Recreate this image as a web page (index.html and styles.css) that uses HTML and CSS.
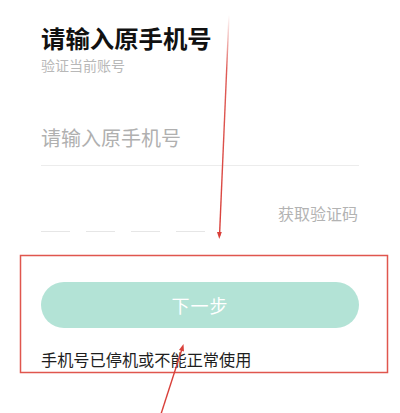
FILE: index.html
```html
<!DOCTYPE html>
<html lang="zh">
<head>
<meta charset="utf-8">
<link rel="stylesheet" href="styles.css">
</head>
<body>
<main class="page">
  <h1 class="title">请输入原手机号</h1>
  <p class="subtitle">验证当前账号</p>
  <div class="field">
    <span class="placeholder">请输入原手机号</span>
  </div>
  <div class="code-row">
    <span class="get-code">获取验证码</span>
  </div>
  <div class="code-boxes">
    <span class="dash"></span><span class="dash"></span><span class="dash"></span><span class="dash"></span>
  </div>
  <button class="next">下一步</button>
  <p class="help">手机号已停机或不能正常使用</p>
</main>
<svg class="annot" width="400" height="413" viewBox="0 0 400 413">
  <defs>
    <linearGradient id="fade" gradientUnits="userSpaceOnUse" x1="0" y1="15" x2="0" y2="236">
      <stop offset="0" stop-color="#d9403a" stop-opacity="0"/>
      <stop offset="0.25" stop-color="#d9403a" stop-opacity="0.85"/>
      <stop offset="1" stop-color="#d9403a"/>
    </linearGradient>
  </defs>
  <rect x="20.5" y="255.5" width="367" height="117" fill="none" stroke="#e0564e" stroke-width="1.5"/>
  <line x1="229" y1="15" x2="219.5" y2="236" stroke="url(#fade)" stroke-width="1.4"/>
  <path d="M217 232 L219.3 239 L221.8 232 Z" fill="#d9403a"/>
  <line x1="161" y1="414" x2="182" y2="349" stroke="#d9403a" stroke-width="1.4"/>
  <path d="M179 350 L183.5 344 L184 351.5 Z" fill="#d9403a"/>
</svg>
</body>
</html>
```
FILE: styles.css
```css
html, body {
  margin: 0;
  padding: 0;
  background: #ffffff;
}
body {
  width: 400px;
  height: 413px;
  overflow: hidden;
  position: relative;
  font-family: "Noto Sans CJK SC", "Noto Sans", sans-serif;
}
.page {
  padding: 24px 41px 0 41px;
  display: flex;
  flex-direction: column;
}
.title {
  margin: 0;
  font-size: 24.4px;
  line-height: 28px;
  font-weight: 700;
  color: #111;
}
.subtitle {
  margin: 4px 0 0 0;
  font-size: 14px;
  line-height: 18px;
  color: #b8b8b8;
}
.field {
  margin-top: 51px;
  padding-bottom: 14px;
  border-bottom: 1px solid #ececec;
}
.placeholder {
  display: block;
  font-size: 20px;
  line-height: 26px;
  color: #b0b0b0;
}
.code-row {
  display: flex;
  justify-content: flex-end;
  margin-top: 37px;
}
.get-code {
  font-size: 16px;
  line-height: 20px;
  color: #b3b3b3;
  margin-right: 1px;
}
.code-boxes {
  display: flex;
  gap: 16px;
  margin-top: 8px;
}
.dash {
  width: 29px;
  height: 1px;
  background: #e6e6e6;
}
.next {
  margin-top: 50px;
  height: 46px;
  border: none;
  border-radius: 23px;
  background: #b3e3d6;
  color: #ffffff;
  font-family: "Noto Sans CJK SC", sans-serif;
  font-size: 18px;
  letter-spacing: 1px;
  padding: 0;
}
.help {
  margin: 21px 0 0 0;
  font-size: 16.2px;
  line-height: 20px;
  color: #1e1e1e;
}
.annot {
  position: absolute;
  left: 0;
  top: 0;
  pointer-events: none;
}
```
